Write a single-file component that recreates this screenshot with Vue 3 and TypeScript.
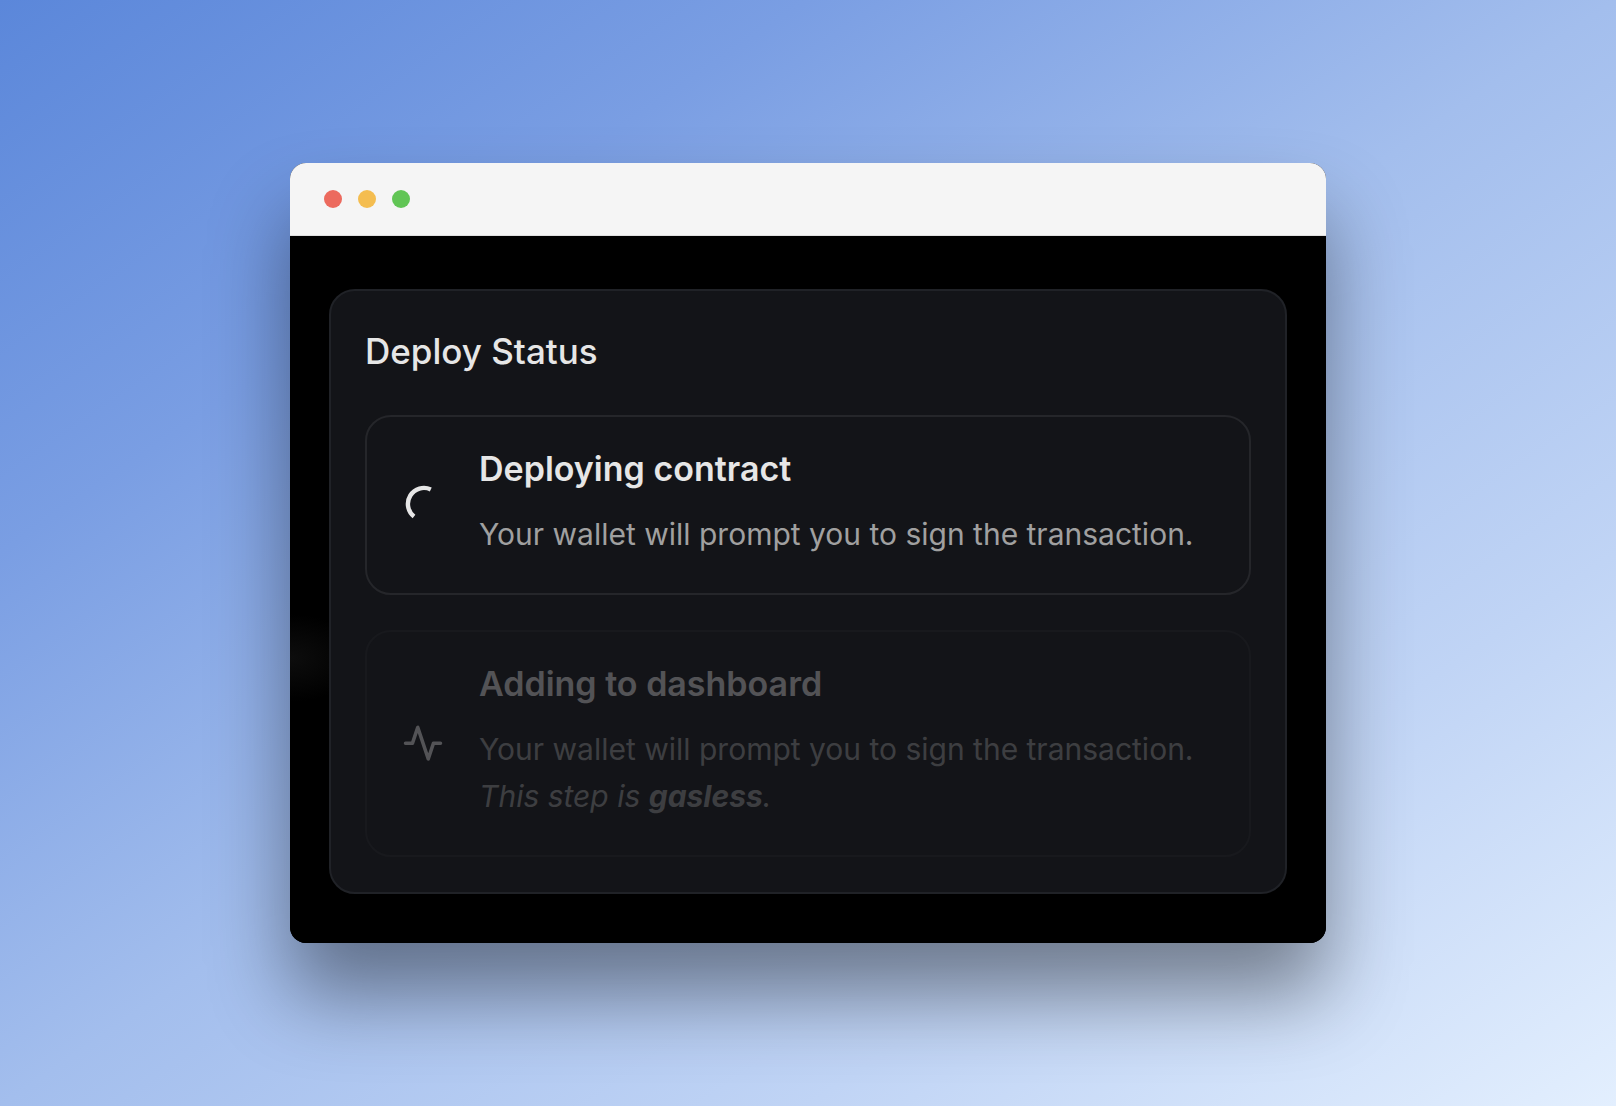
<script setup lang="ts">
interface Step {
  id: string
  title: string
  description: string
  icon: 'spinner' | 'activity'
  pending: boolean
  gasless: boolean
}

const lights: string[] = ['close', 'minimize', 'zoom']

const steps: Step[] = [
  {
    id: 'deploy',
    title: 'Deploying contract',
    description: 'Your wallet will prompt you to sign the transaction.',
    icon: 'spinner',
    pending: false,
    gasless: false,
  },
  {
    id: 'dashboard',
    title: 'Adding to dashboard',
    description: 'Your wallet will prompt you to sign the transaction.',
    icon: 'activity',
    pending: true,
    gasless: true,
  },
]
</script>

<template>
  <main class="backdrop">
    <div class="window">
      <header class="titlebar">
        <span v-for="light in lights" :key="light" class="light" :class="light"></span>
      </header>
      <div class="stage">
        <section class="card" aria-labelledby="status-title">
          <h1 id="status-title" class="card-title">Deploy Status</h1>
          <ol class="steps">
            <li v-for="step in steps" :key="step.id" class="step" :class="{ pending: step.pending }">
              <svg v-if="step.icon === 'spinner'" class="icon" viewBox="0 0 42 42" aria-hidden="true">
                <path d="M28.8 5.5 A16 16 0 0 0 12 32.5" fill="none" stroke="currentColor" stroke-width="4.4" />
              </svg>
              <svg v-else class="icon" viewBox="0 0 24 24" aria-hidden="true">
                <polyline
                  points="22 11.5 18 11.5 15 20.5 9 2.5 6 11.5 2 11.5"
                  fill="none"
                  stroke="currentColor"
                  stroke-width="2"
                  stroke-linecap="round"
                  stroke-linejoin="round"
                />
              </svg>
              <div class="body">
                <h2 class="step-title">{{ step.title }}</h2>
                <p class="description">
                  {{ step.description }}
                  <template v-if="step.gasless"><br /><i>This step is <strong>gasless</strong>.</i></template>
                </p>
              </div>
            </li>
          </ol>
        </section>
      </div>
    </div>
  </main>
</template>

<style>
body {
  margin: 0;
}
</style>

<style scoped>
.backdrop {
  box-sizing: border-box;
  min-height: 100vh;
  padding: 48px;
  display: flex;
  align-items: center;
  justify-content: center;
  background: linear-gradient(to bottom right, #5b87da 0%, #7a9ee3 25%, #a3beed 50%, #c0d4f5 75%, #e3effe 100%);
  font-family: Inter, "Liberation Sans", sans-serif;
}

.window {
  width: 100%;
  max-width: 1036px;
  overflow: hidden;
  border-radius: 16px;
  background: #000;
  box-shadow: 0 52px 80px rgba(0, 0, 0, 0.42);
}

.titlebar {
  height: 72px;
  padding-left: 34px;
  display: flex;
  align-items: center;
  gap: 16px;
  border-bottom: 1px solid #e0e0e0;
  background: #f5f5f5;
}

.light {
  width: 18px;
  height: 18px;
  border-radius: 50%;
}

.close {
  background: #ec6a5e;
}

.minimize {
  background: #f4bd50;
}

.zoom {
  background: #61c555;
}

.stage {
  padding: 53px 39px 49px;
  background: radial-gradient(ellipse 72px 44px at 0 422px, #0d0d0d, transparent), #000;
}

.card {
  padding: 35px 34px;
  border: 2px solid #202227;
  border-radius: 26px;
  background: #131418;
  color: #e6e6e6;
}

.card-title {
  margin: 0 0 39px;
  font-size: 35px;
  font-weight: 500;
  line-height: 50px;
}

.steps {
  margin: 0;
  padding: 0;
  display: flex;
  flex-direction: column;
  gap: 35px;
  list-style: none;
}

.step {
  padding: 35px;
  display: flex;
  align-items: center;
  gap: 35px;
  border: 2px solid #25262a;
  border-radius: 26px;
}

.pending {
  opacity: 0.3;
}

.icon {
  flex: none;
  width: 42px;
  height: 42px;
}

.step-title {
  margin: 0 0 25px;
  font-size: 34px;
  font-weight: 600;
  line-height: 34px;
}

.description {
  margin: 0;
  color: #a0a0a0;
  font-size: 30px;
  line-height: 47px;
}
</style>
